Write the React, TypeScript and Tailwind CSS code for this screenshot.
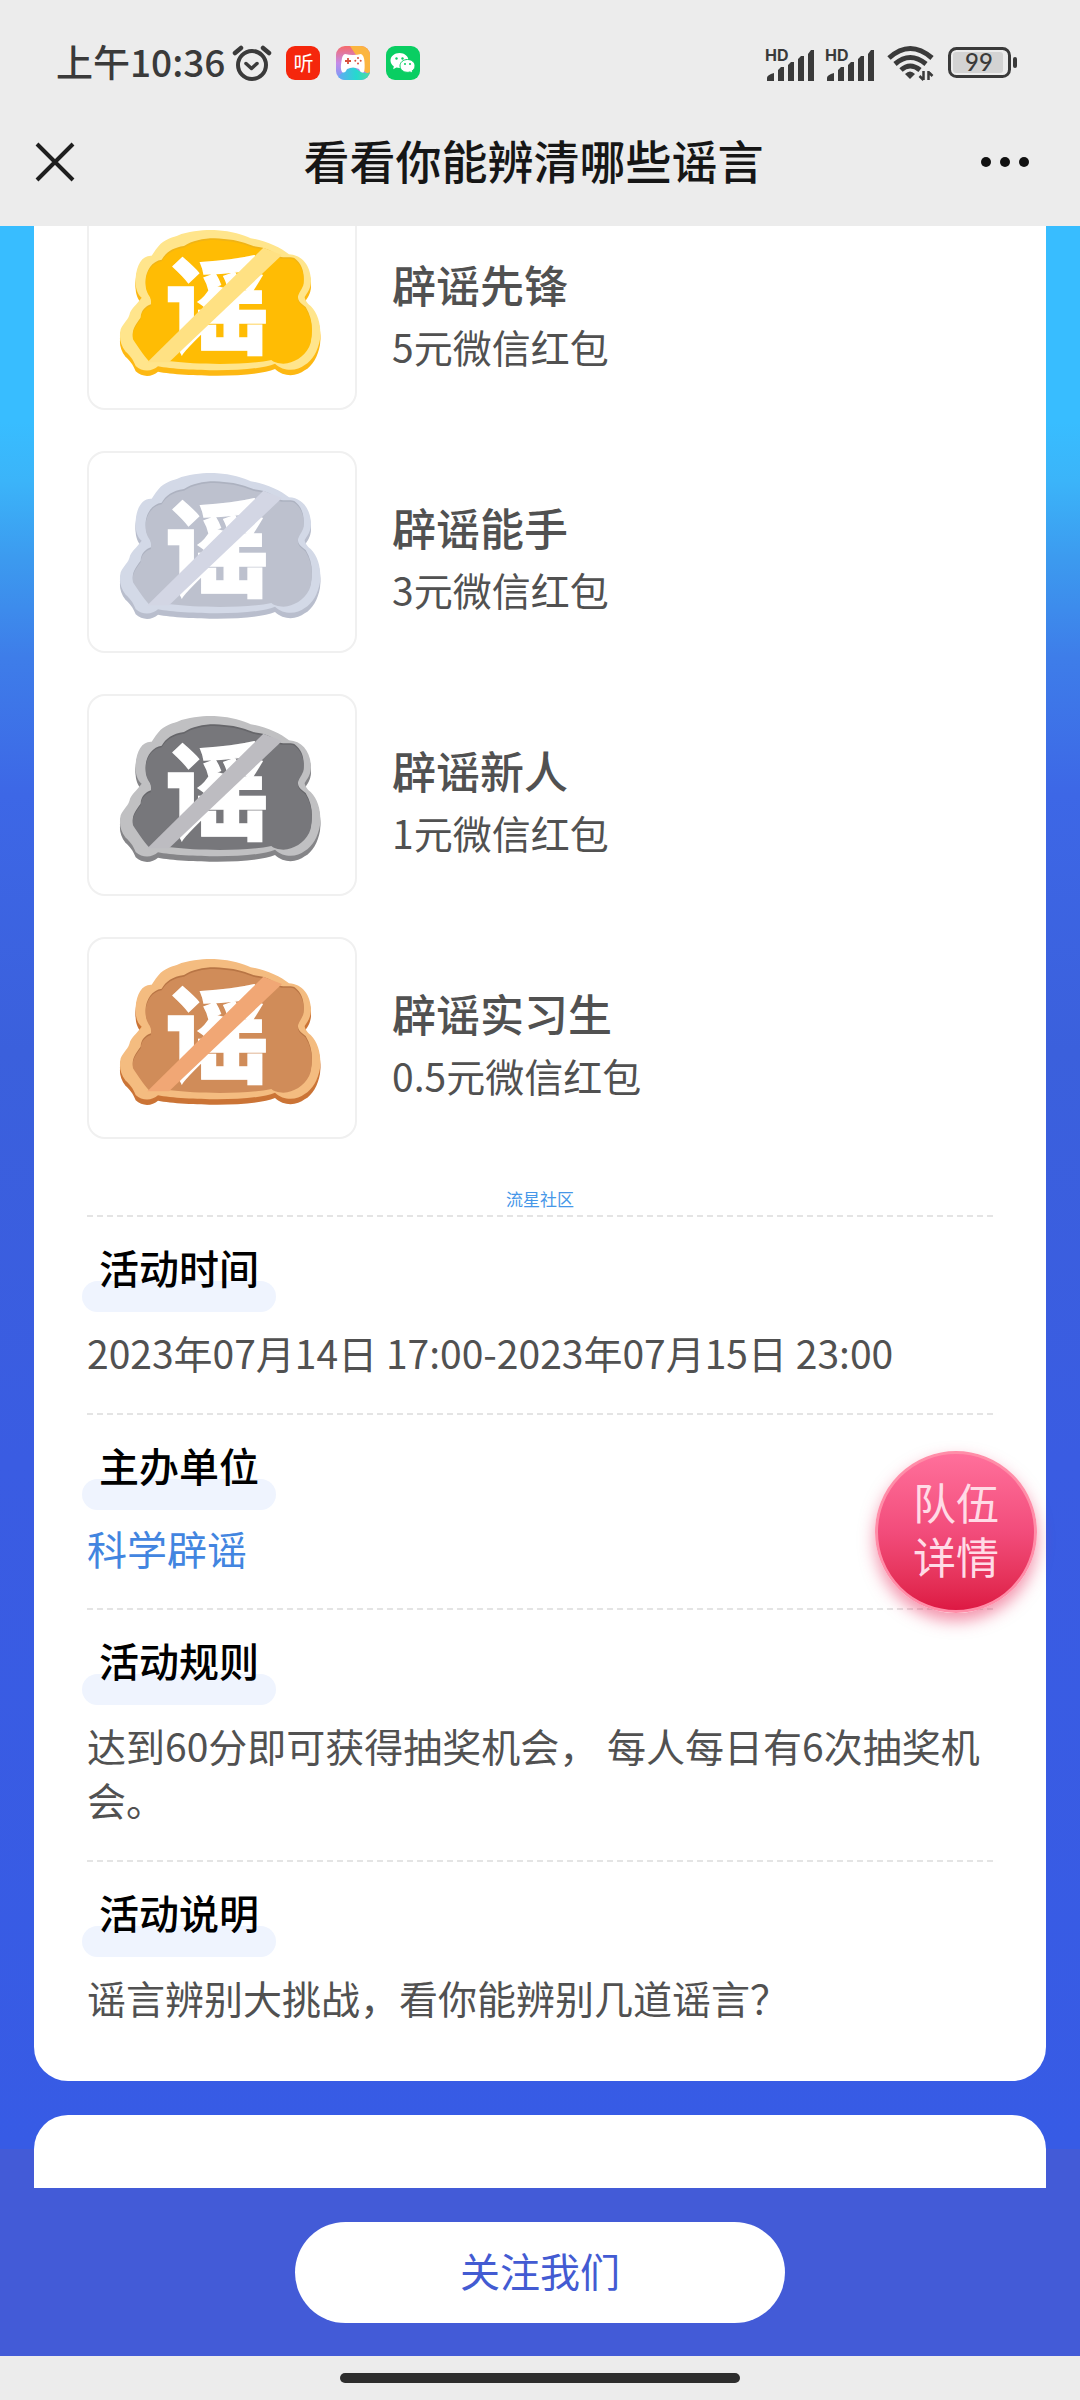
import React from "react";

type Palette = { face: string; shade: string; rim: string; slash: string; edge: string };

const prizes: { name: string; reward: string; palette: Palette }[] = [
  { name: "辟谣先锋", reward: "5元微信红包", palette: { face: "#ffbc04", shade: "#f0b416", rim: "#ffe58c", slash: "#ffe183", edge: "#fdb813" } },
  { name: "辟谣能手", reward: "3元微信红包", palette: { face: "#bdc1ce", shade: "#adb2c0", rim: "#d3d9e7", slash: "#d3d6e4", edge: "#b9becd" } },
  { name: "辟谣新人", reward: "1元微信红包", palette: { face: "#77777b", shade: "#66666a", rim: "#c0c0c2", slash: "#bdbcc1", edge: "#858588" } },
  { name: "辟谣实习生", reward: "0.5元微信红包", palette: { face: "#d08c59", shade: "#b87545", rim: "#f4bc80", slash: "#f1a775", edge: "#cb7436" } },
];

const outline =
  "M183 300C170 290 163 270 165 240C168 200 185 172 213 174C222 160 230 148 240 138C262 120 280 118 290 114C330 98 380 96 410 98C450 100 490 112 510 122C555 128 600 150 625 170C665 172 690 205 691 250C690 275 680 285 672 298C672 305 680 318 690 325C715 350 722 390 718 425C712 460 695 490 672 502C650 520 610 524 583 498C550 512 480 518 410 518C350 518 270 514 232 506C215 522 185 524 165 505C158 485 145 470 135 462C118 440 115 420 120 395C128 375 145 365 148 345C155 330 175 312 183 300Z";
const face =
  "M211 305C211 290 195 285 195 255C193 222 213 190 243 186C255 165 275 150 310 145C340 125 390 118 430 124C470 126 500 138 520 146C560 150 580 165 592 175C610 183 630 174 642 182C665 200 672 225 668 258C660 278 650 285 652 300C654 315 665 318 675 328C695 360 697 395 690 430C680 465 650 485 620 492C600 495 580 490 572 482C500 498 350 496 270 486L205 486C190 470 170 440 157 420C153 395 165 380 180 360C180 340 195 325 211 320Z";

function Badge({ palette, name }: { palette: Palette; name: string }) {
  return (
    <svg viewBox="25 37 798 594" role="img" aria-label={name} className="block h-full w-full">
      <path d={outline} fill={palette.edge} transform="translate(0 16)" />
      <path d={outline} fill={palette.edge} transform="translate(0 8)" />
      <path d={outline} fill={palette.rim} />
      <path d={face} fill={palette.shade} />
      <path d={face} fill={palette.face} transform="translate(0 5)" />
      <text
        x="408"
        y="442"
        textAnchor="middle"
        fontSize="312"
        fontWeight="900"
        fill="#fff"
        stroke="#fff"
        strokeWidth="4"
        fontFamily="'Noto Sans CJK SC', sans-serif"
      >
        谣
      </text>
      <path d="M548 150L604 172L265 494H200Z" fill={palette.slash} />
    </svg>
  );
}

function Signal() {
  return (
    <svg width="52" height="40" viewBox="0 -4 52 40" fill="#3a3a3a" aria-hidden="true">
      <text x="0" y="14" fontSize="16" fontWeight="700" fontFamily="Inter, sans-serif">HD</text>
      <path d="M2 34V31Q2 28 9 26V34ZM13 34V23L16 20H19V34ZM23 34V18L26 15H29V34ZM33 34V12L36 9H39V34ZM43 34V7L46 3H49V34Z" />
    </svg>
  );
}

function StatusBar() {
  return (
    <div className="flex h-[100px] items-center pt-[26px] pr-[62px] pl-[56px] text-[#3a3a3a]">
      <span className="pb-[4px] text-[37px] leading-[54px] font-medium">上午10:36</span>
      <svg className="ml-[7px]" width="40" height="38" viewBox="0 0 40 38" fill="none" stroke="#3a3a3a" strokeLinecap="round" aria-hidden="true">
        <circle cx="20" cy="21" r="14" strokeWidth="4" />
        <path d="M14 19.500L19.500 24.500L25 19.500" strokeWidth="3.500" strokeLinejoin="round" />
        <path d="M3 9L9 4M37 9L31 4" strokeWidth="4.500" />
      </svg>
      <span className="ml-[14px] flex size-[34px] items-center justify-center rounded-[9px] bg-[#f5260c] text-[20px] leading-none text-white">听</span>
      <svg className="ml-[16px]" width="34" height="34" viewBox="0 0 34 34" aria-hidden="true">
        <defs>
          <linearGradient id="pad-base" x1="0" y1="0" x2="0" y2="1">
            <stop offset="0" stopColor="#f66a6a" />
            <stop offset=".5" stopColor="#c58ae8" />
            <stop offset="1" stopColor="#6f9df8" />
          </linearGradient>
          <linearGradient id="pad-teal" x1="0" y1="0" x2="1" y2="0">
            <stop offset="0" stopColor="#6aa2fa" />
            <stop offset=".6" stopColor="#25d9cf" />
            <stop offset="1" stopColor="#52d8a0" />
          </linearGradient>
          <clipPath id="pad-clip"><rect width="34" height="34" rx="9" /></clipPath>
        </defs>
        <g clipPath="url(#pad-clip)">
          <rect width="34" height="34" fill="url(#pad-base)" />
          <path d="M14 0H34V28Q24 26 22 12Z" fill="#fbb540" />
          <path d="M0 34Q8 22 18 21Q28 30 34 26V34Z" fill="url(#pad-teal)" />
          <path d="M9 8Q17 10 25 8Q28 9 28.500 16Q29 23 28 26Q25 28 23 23Q17 20 11 23Q9 28 6 26Q4 23 5.500 15Q6 9 9 8Z" fill="#fff" />
          <path d="M12 12V18M9 15H15" stroke="#d94f3d" strokeWidth="1.800" />
          <circle cx="22" cy="12" r="1" fill="#d94f3d" />
          <circle cx="22" cy="17.500" r="1" fill="#d94f3d" />
          <circle cx="19.300" cy="14.800" r="1" fill="#d94f3d" />
          <circle cx="24.700" cy="14.800" r="1" fill="#d94f3d" />
        </g>
      </svg>
      <svg className="ml-[16px]" width="34" height="34" viewBox="0 0 34 34" aria-hidden="true">
        <rect width="34" height="34" rx="9" fill="#09ce62" />
        <path d="M13.500 7C8.500 7 4.500 10.300 4.500 14.500C4.500 17 5.800 19 7.800 20.300L7.200 23.200L10.400 21.500C11.500 21.800 12.500 22 13.500 22C18.500 22 22.500 18.700 22.500 14.500C22.500 10.300 18.500 7 13.500 7Z" fill="#fff" />
        <path d="M21.500 13.500C17.300 13.500 14 16.300 14 19.900C14 23.500 17.300 26.300 21.500 26.300C22.400 26.300 23.200 26.200 24 25.900L26.700 27.300L26.200 24.800C27.900 23.600 29 21.900 29 19.900C29 16.300 25.700 13.500 21.500 13.500Z" fill="#fff" stroke="#09ce62" />
        <g fill="#09ce62">
          <circle cx="10.500" cy="12.500" r="1.200" /><circle cx="16.500" cy="12.500" r="1.200" />
          <circle cx="19" cy="18" r="1" /><circle cx="24" cy="18" r="1" />
        </g>
      </svg>
      <div className="ml-auto flex items-center">
        <Signal />
        <span className="w-[8px]" />
        <Signal />
        <svg className="ml-[10px]" width="48" height="38" viewBox="0 0 48 38" fill="none" stroke="#3a3a3a" aria-hidden="true">
          <path d="M2 14Q23 -5 45 14" strokeWidth="5" />
          <path d="M8 20Q23 7 39 20" strokeWidth="5" />
          <path d="M14 26Q23 18 33 26" strokeWidth="5" />
          <path d="M18 30Q23 25 28 30L23 35Z" fill="#3a3a3a" stroke="none" />
          <path d="M36.500 27V36M32.500 32L36.500 36M41.500 36V27M41.500 28L45.500 32" strokeWidth="2.500" />
        </svg>
        <svg className="ml-[13px]" width="70" height="32" viewBox="0 0 70 32" aria-hidden="true">
          <rect x="1.500" y="1.500" width="60" height="28" rx="7" fill="none" stroke="#3a3a3a" strokeWidth="3" />
          <rect x="5" y="5" width="50" height="21" rx="3" fill="#d3d3d3" />
          <rect x="65" y="10" width="4" height="11" rx="2" fill="#3a3a3a" />
          <text x="31" y="24" textAnchor="middle" fontSize="24" fontWeight="500" fill="#3a3a3a" fontFamily="Lato, sans-serif">99</text>
        </svg>
      </div>
    </div>
  );
}

function TitleBar() {
  return (
    <div className="grid h-[126px] grid-cols-[1fr_auto_1fr] items-center pr-[47px] pb-[2px] pl-[33px]">
      <button type="button" aria-label="关闭" className="size-[44px]">
        <svg width="44" height="44" viewBox="0 0 44 44" stroke="#1e1e1e" strokeWidth="4" aria-hidden="true">
          <path d="M4 4L40 40M40 4L4 40" />
        </svg>
      </button>
      <h1 className="pb-[6px] pl-[1px] text-[46px] leading-[60px] font-medium text-[#161616]">看看你能辨清哪些谣言</h1>
      <button type="button" aria-label="更多" className="h-[44px] w-[54px] justify-self-end">
        <svg width="54" height="44" viewBox="0 0 54 44" fill="#111" aria-hidden="true">
          <circle cx="7" cy="22" r="5" /><circle cx="26" cy="22" r="5" /><circle cx="45" cy="22" r="5" />
        </svg>
      </button>
    </div>
  );
}

function Section({ title, children }: { title: string; children: React.ReactNode }) {
  return (
    <section className="border-t-2 border-dashed border-[#e4e4e4] pt-[23px] pb-[34px]">
      <h2 className="relative isolate mb-[31px] -ml-[5px] w-fit px-[17px] text-[40px] leading-[54px] font-medium text-black">
        <span className="absolute inset-x-0 -bottom-[18px] -z-10 h-[31px] rounded-full bg-[#eff4fe]" />
        {title}
      </h2>
      {children}
    </section>
  );
}

export default function App() {
  return (
    <div className="relative flex min-h-screen flex-col overflow-hidden bg-[#ececec] font-['Noto_Sans_CJK_SC',sans-serif]">
      <header>
        <StatusBar />
        <TitleBar />
      </header>

      <main className="flex flex-1 flex-col gap-[34px] overflow-hidden bg-[linear-gradient(to_bottom,#38bdff_0%,#38bdff_10%,#3bb4f9_13%,#3c9aef_17%,#3e7de9_22%,#3d67e6_29%,#3b60dc_42%,#3a5ce2_63%,#375be5_98%,#435bd7_98%)] px-[34px]">
        <div className="rounded-b-[34px] bg-white px-[53px] pb-[23px]">
          <ul className="-mt-[18px] flex flex-col gap-[41px]">
            {prizes.map((p) => (
              <li key={p.name} className="flex items-center gap-[35px]">
                <div className="h-[202px] w-[270px] shrink-0 rounded-[18px] border-2 border-[#f0f0f0]">
                  <Badge palette={p.palette} name={p.name} />
                </div>
                <div className="pt-[12px] text-[#515151]">
                  <h3 className="text-[44px] leading-[62px] font-medium">{p.name}</h3>
                  <p className="text-[39px] leading-[62px]">{p.reward}</p>
                </div>
              </li>
            ))}
          </ul>
          <p className="flex h-[76px] items-end justify-center pb-[4px] text-[17px] leading-[24px] text-[#4697e8]">流星社区</p>

          <Section title="活动时间">
            <p className="text-[39px] leading-[54px] text-[#515151]">2023年07月14日 17:00-2023年07月15日 23:00</p>
          </Section>
          <Section title="主办单位">
            <a href="#organizer" className="block w-fit text-[40px] leading-[51px] text-[#4285e0]">科学辟谣</a>
          </Section>
          <Section title="活动规则">
            <p className="text-[39px] leading-[54px] text-[#515151]">达到60分即可获得抽奖机会， 每人每日有6次抽奖机会。</p>
          </Section>
          <Section title="活动说明">
            <p className="text-[39px] leading-[54px] text-[#515151]">谣言辨别大挑战，看你能辨别几道谣言？</p>
          </Section>
        </div>
        <div className="min-h-[72px] flex-1 rounded-t-[34px] bg-white" />
      </main>

      <footer>
        <div className="flex justify-center bg-[#435bd7] pt-[34px] pb-[33px]">
          <button type="button" className="h-[101px] w-[490px] rounded-full bg-white pb-[6px] text-[40px] text-[#435bd2]">关注我们</button>
        </div>
        <div className="flex h-[44px] items-center justify-center">
          <span className="h-[10px] w-[400px] rounded-full bg-[#2d2d2d]" />
        </div>
      </footer>

      <button
        type="button"
        className="absolute top-[1451px] right-[43px] flex size-[162px] flex-col items-center justify-center rounded-full border-3 border-[#ff8da8] bg-linear-to-b from-[#ff6f9b] via-[#f24c7b] to-[#dd1843] pb-[8px] text-[43px] leading-[54px] text-[#ffdbe6] shadow-[0_8px_16px_rgba(232,40,90,0.5)]"
      >
        <span>队伍</span>
        <span>详情</span>
      </button>
    </div>
  );
}
